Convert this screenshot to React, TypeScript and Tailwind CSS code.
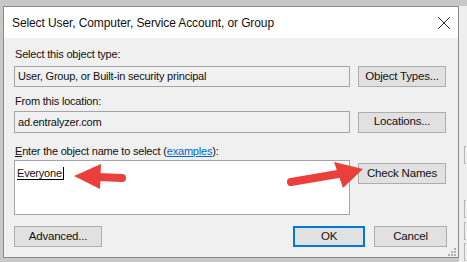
import { X } from "lucide-react";

function Btn({ label, w, primary = false }: { label: React.ReactNode; w: string; primary?: boolean }) {
  return (
    <div
      className={`${w} flex h-[21px] shrink-0 items-center justify-center border bg-[#e1e1e1] text-[11.5px] ${
        primary ? "border-[#0078d7] shadow-[inset_0_0_0_1px_#0078d7]" : "border-[#adadad]"
      }`}
    >
      {label}
    </div>
  );
}

export default function App() {
  return (
    <div
      className="relative h-[262px] w-[467px] overflow-hidden bg-[#c7c7c7] text-[#111]"
      style={{ fontFamily: '"Liberation Sans", Arial, sans-serif' }}
    >
      <div className="flex pl-[3px] pt-[6px]">
        {/* dialog */}
        <div className="flex h-[252px] w-[456px] flex-col border border-[#8a8a8a] bg-[#f0f0f0]">
          <div className="flex h-[31px] shrink-0 items-center justify-between bg-white pl-[8px] pr-[3px]">
            <span className="text-[12px] tracking-[-0.1px]">Select User, Computer, Service Account, or Group</span>
            <X className="h-[22px] w-[22px] text-[#222]" strokeWidth={1.05} />
          </div>

          <div className="flex flex-1 flex-col pl-[10px] pr-[11px] text-[11px] tracking-[-0.2px]">
            <div className="mt-[9px] h-[14px] pl-[1px] leading-[14px]">Select this object type:</div>
            <div className="mt-[5px] flex items-center gap-[8px]">
              <div className="flex h-[21px] w-[336px] items-center border border-[#a5a5a5] bg-[#f0f0f0] pl-[3px]">
                User, Group, or Built-in security principal
              </div>
              <Btn label="Object Types..." w="w-[88px]" />
            </div>

            <div className="mt-[7px] h-[14px] pl-[1px] leading-[14px]">From this location:</div>
            <div className="mt-[3px] flex items-center gap-[8px]">
              <div className="flex h-[22px] w-[336px] items-center border border-[#a5a5a5] bg-[#f0f0f0] pl-[3px]">
                ad.entralyzer.com
              </div>
              <Btn label="Locations..." w="w-[88px]" />
            </div>

            <div className="mt-[11px] h-[14px] pl-[1px] leading-[14px]">
              <span className="underline">E</span>nter the object name to select (
              <span className="text-[#0066cc] underline">examples</span>):
            </div>
            <div className="mt-[2px] flex items-start gap-[8px]">
              <div className="h-[55px] w-[336px] border border-[#a5a5a5] bg-white pl-[2px] pt-[4px]">
                <span className="border-r border-b border-black pr-[1px] leading-[13px]">Everyone</span>
              </div>
              <div className="mt-[3px]">
                <Btn label="Check Names" w="w-[88px]" />
              </div>
            </div>

            <div className="mt-[11px] flex items-center">
              <Btn label="Advanced..." w="w-[88px]" />
              <div className="flex-1" />
              <Btn label="OK" w="w-[72px]" primary />
              <div className="w-[9px]" />
              <Btn label="Cancel" w="w-[73px]" />
            </div>
          </div>
        </div>

        {/* background window peeking at the right */}
        <div className="flex h-[256px] w-[8px] flex-col bg-[#eeeeee]">
          <div className="ml-[5px] mt-[140px] h-[18px] w-[2px] border-y border-l border-[#b5b5b5]" />
          <div className="ml-[5px] mt-[36px] h-[18px] w-[2px] border-y border-l border-[#b5b5b5]" />
          <div className="ml-[5px] mt-[4px] h-[18px] w-[2px] border-y border-l border-[#b5b5b5]" />
          <div className="ml-[5px] mt-[3px] h-[18px] w-[2px] border-y border-l border-[#b5b5b5]" />
        </div>
      </div>

      {/* resize grip */}
      <svg className="pointer-events-none absolute left-[448px] top-[248px]" width="9" height="9">
        <rect x="6" y="0" width="2" height="2" fill="#b0b0b0" />
        <rect x="3" y="3" width="2" height="2" fill="#b0b0b0" />
        <rect x="6" y="3" width="2" height="2" fill="#b0b0b0" />
        <rect x="0" y="6" width="2" height="2" fill="#b0b0b0" />
        <rect x="3" y="6" width="2" height="2" fill="#b0b0b0" />
        <rect x="6" y="6" width="2" height="2" fill="#b0b0b0" />
      </svg>

      {/* annotation arrows */}
      <svg className="pointer-events-none absolute left-0 top-0" width="467" height="262">
        <line x1="98" y1="177" x2="122" y2="178" stroke="#ea3f3a" strokeWidth="8" strokeLinecap="round" />
        <polygon points="74,176 101,164 100,189" fill="#ea3f3a" />
        <line x1="291" y1="182" x2="338" y2="174" stroke="#ea3f3a" strokeWidth="8" strokeLinecap="round" />
        <polygon points="334,162 363,169 343,188" fill="#ea3f3a" />
      </svg>
    </div>
  );
}
